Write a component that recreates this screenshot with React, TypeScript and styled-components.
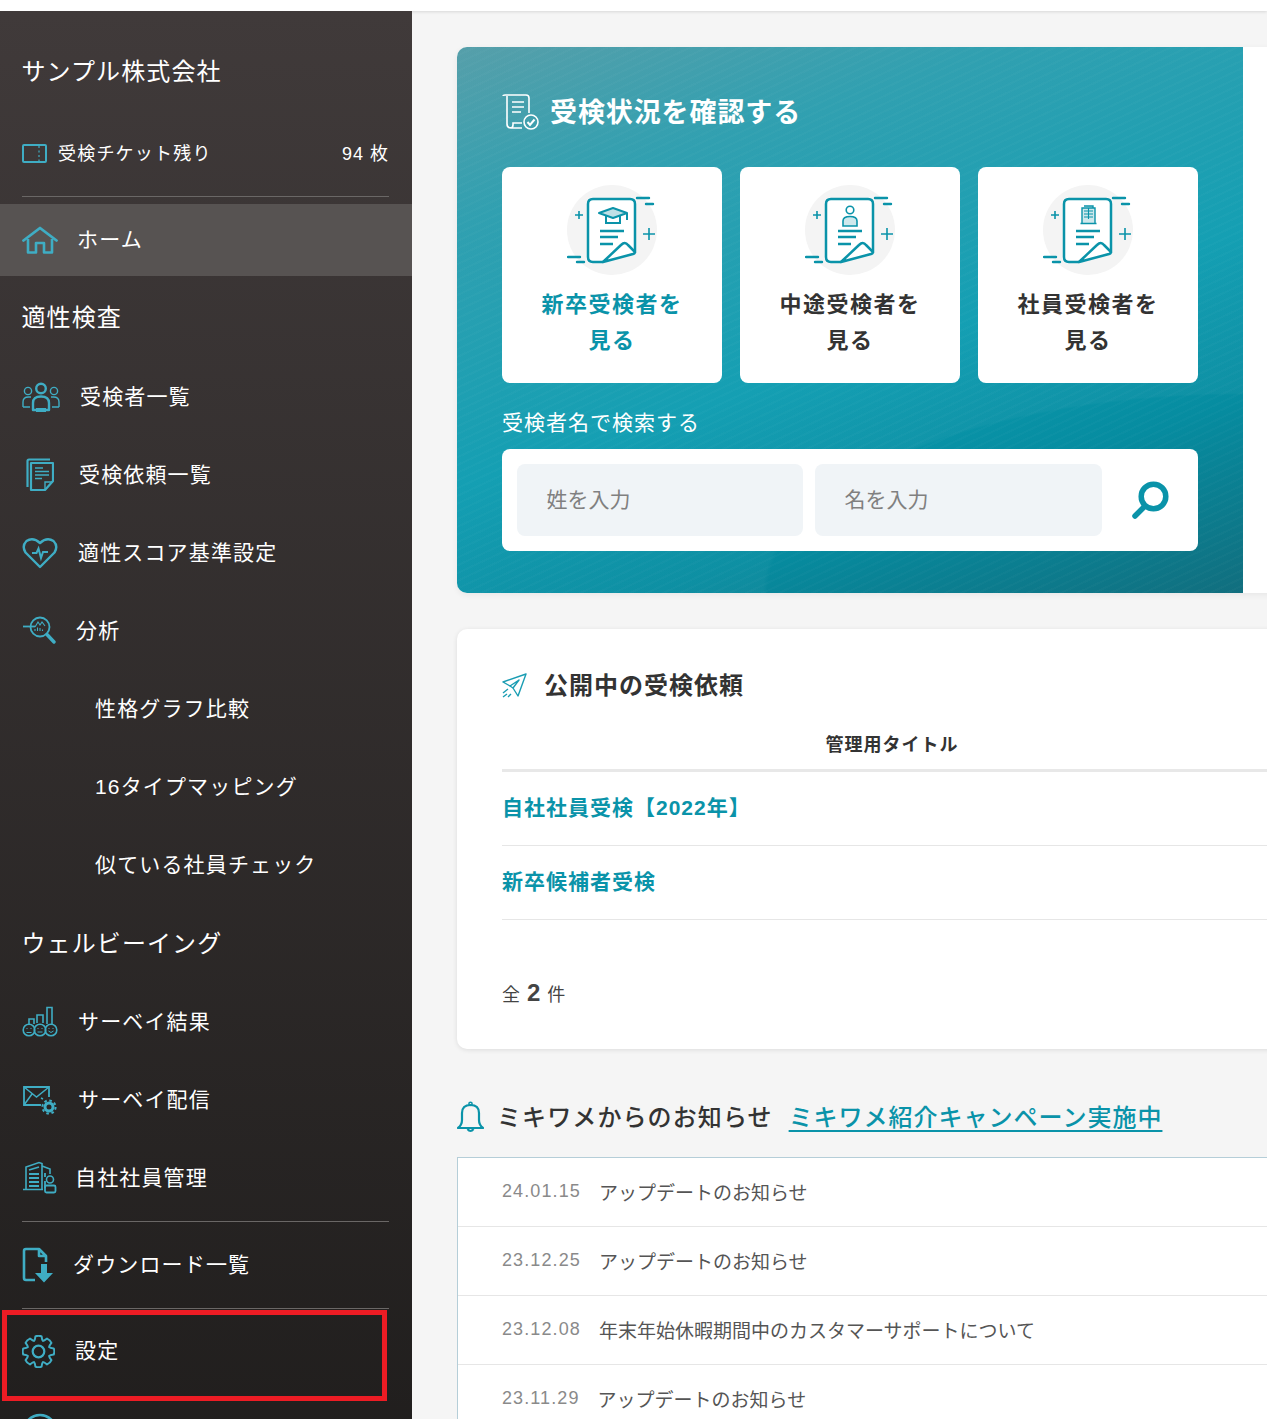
import React from "react";
import styled, { createGlobalStyle } from "styled-components";

const TEAL = "#0a93a9";
const NAV_ICON = "#3fadc4";

const GlobalStyle = createGlobalStyle`
  html, body {
    margin: 0;
    padding: 0;
    background: #f5f5f5;
  }
  body {
    font-family: "Liberation Sans", "Noto Sans CJK JP", sans-serif;
    color: #333;
  }
  * {
    box-sizing: border-box;
  }
`;

const Page = styled.div`
  position: relative;
  width: 1267px;
  height: 1419px;
  overflow: hidden;
  background: #f5f5f5;
`;

const TopBar = styled.div`
  height: 11px;
  background: #fff;
  box-shadow: 0 1px 3px rgba(0, 0, 0, 0.12);
`;

const Body = styled.div`
  display: flex;
  align-items: flex-start;
`;

const Sidebar = styled.aside`
  position: relative;
  flex: none;
  width: 412px;
  height: 1500px;
  background: linear-gradient(180deg, #403a3a 0%, #1f1d1c 100%);
  color: #fff;
`;

const Company = styled.div`
  height: 120px;
  padding: 46px 0 0 21.5px;
  font-size: 24px;
  line-height: 30px;
  letter-spacing: 1.1px;
`;

const Ticket = styled.div`
  display: flex;
  align-items: center;
  height: 44px;
  margin: 0 23px 0 22px;
  font-size: 18px;
  letter-spacing: 1.2px;
`;

const TicketLabel = styled.span`
  margin: 0 0 2px 11px;
  flex: 1;
`;

const TicketCount = styled.span`
  margin-bottom: 2px;
  font-size: 18px;
  letter-spacing: 1px;
`;

const Rule = styled.hr<{ $mt?: number; $mb?: number }>`
  height: 1px;
  margin: ${(p) => p.$mt ?? 0}px 23px ${(p) => p.$mb ?? 0}px 22px;
  border: 0;
  background: #6a6766;
`;

const NavItem = styled.a<{ $h?: number; $active?: boolean; $gap?: number; $indent?: number }>`
  display: flex;
  align-items: center;
  height: ${(p) => p.$h ?? 78}px;
  padding-left: ${(p) => p.$indent ?? 22}px;
  gap: ${(p) => p.$gap ?? 19}px;
  font-size: 21px;
  letter-spacing: 1.15px;
  color: #fff;
  background: ${(p) => (p.$active ? "#575352" : "transparent")};
`;

const NavText = styled.span`
  margin-bottom: 4px;
`;

const NavHeading = styled.div<{ $h?: number }>`
  display: flex;
  align-items: center;
  height: ${(p) => p.$h ?? 82}px;
  padding: 0 0 4px 21.5px;
  font-size: 24px;
  letter-spacing: 1.1px;
`;

const Annotation = styled.div`
  position: absolute;
  left: 2px;
  top: 1299px;
  width: 385px;
  height: 91px;
  border: 5px solid #ed1c24;
`;

const Main = styled.main`
  flex: none;
  width: 900px;
  padding: 36px 0 0 45px;
`;

const HeroCard = styled.section`
  width: 855px;
  height: 546px;
  border-radius: 10px 0 0 10px;
  background: #fff;
  box-shadow: 0 2px 6px rgba(0, 0, 0, 0.06);
`;

const Hero = styled.div`
  width: 786px;
  height: 546px;
  padding: 45px 45px 0;
  border-radius: 10px 0 0 10px;
  background:
    radial-gradient(ellipse 480px 200px at 100% 100%, rgba(255, 255, 255, 0) 99%, rgba(255, 255, 255, 0.03) 100%),
    repeating-linear-gradient(155deg, rgba(255, 255, 255, 0.02) 0 2px, rgba(255, 255, 255, 0) 2px 7px),
    linear-gradient(162deg, #519ca7 0%, #2a9dae 22%, #0d9cb1 55%, #068ca0 76%, #116e7e 100%);
`;

const HeroTitle = styled.h2`
  display: flex;
  align-items: center;
  gap: 11px;
  height: 40px;
  margin: 0;
  font-size: 27px;
  font-weight: 700;
  letter-spacing: 0.9px;
  color: #fff;
`;

const Cards = styled.div`
  display: flex;
  gap: 18px;
  margin-top: 35px;
`;

const Card = styled.a<{ $active?: boolean }>`
  display: flex;
  flex-direction: column;
  align-items: center;
  width: 220px;
  height: 216px;
  padding-top: 18px;
  border-radius: 8px;
  background: #fff;
  color: ${(p) => (p.$active ? TEAL : "#333")};
  font-size: 22px;
  font-weight: 700;
  line-height: 36px;
  letter-spacing: 1.5px;
  text-align: center;
`;

const CardLabel = styled.div`
  margin-top: 12px;
`;

const SearchLabel = styled.div`
  margin-top: 26px;
  font-size: 21px;
  line-height: 28px;
  letter-spacing: 1px;
  color: #fff;
`;

const SearchBox = styled.div`
  display: flex;
  align-items: center;
  gap: 12px;
  width: 696px;
  height: 102px;
  margin-top: 12px;
  padding: 0 0 0 15px;
  border-radius: 8px;
  background: #fff;
`;

const NameInput = styled.div<{ $w: number }>`
  display: flex;
  align-items: center;
  width: ${(p) => p.$w}px;
  height: 72px;
  padding: 0 0 5px 29.5px;
  border-radius: 8px;
  background: #f0f4f7;
  font-size: 21px;
  color: #808080;
`;

const SearchButton = styled.div`
  display: flex;
  justify-content: center;
  flex: 1;
  padding-right: 12px;
`;

const Panel = styled.section`
  width: 855px;
  height: 420px;
  margin-top: 36px;
  padding: 36px 0 0 45px;
  border-radius: 10px 0 0 10px;
  background: #fff;
  box-shadow: 0 1px 5px rgba(0, 0, 0, 0.1);
`;

const PanelTitle = styled.h3`
  display: flex;
  align-items: center;
  gap: 17px;
  height: 40px;
  margin: 0;
  font-size: 24px;
  font-weight: 700;
  letter-spacing: 1px;
  color: #333;
`;

const TableHead = styled.div`
  width: 780px;
  height: 67px;
  padding-top: 26px;
  border-bottom: 3px solid #e8e8e8;
  font-size: 18px;
  font-weight: 700;
  line-height: 29px;
  letter-spacing: 1px;
  text-align: center;
  color: #333;
`;

const TableRow = styled.div`
  display: flex;
  align-items: center;
  height: 74px;
  padding-bottom: 6px;
  border-bottom: 1px solid #e6e6e6;
  color: ${TEAL};
  font-size: 21px;
  font-weight: 700;
  letter-spacing: 1px;
`;

const Total = styled.div`
  display: flex;
  align-items: baseline;
  gap: 7px;
  margin-top: 59px;
  font-size: 18px;
  color: #444;
`;

const TotalNum = styled.strong`
  font-size: 24px;
`;

const NoticeHead = styled.div`
  display: flex;
  align-items: center;
  height: 40px;
  margin-top: 48px;
`;

const NoticeTitle = styled.h3`
  margin: 0 0 4px 13px;
  font-size: 24px;
  font-weight: 500;
  letter-spacing: 1.1px;
  color: #333;
`;

const NoticeLink = styled.a`
  margin: 0 0 4px 16px;
  font-size: 24px;
  font-weight: 500;
  letter-spacing: 1px;
  color: ${TEAL};
  text-decoration: underline;
  text-decoration-thickness: 2px;
  text-underline-offset: 4px;
`;

const NoticeList = styled.ul`
  width: 855px;
  margin: 20px 0 0;
  padding: 0;
  list-style: none;
  border: 1px solid #b5ced8;
  border-right: 0;
  background: #fff;
`;

const NoticeRow = styled.li`
  display: flex;
  align-items: center;
  gap: 18px;
  height: 69px;
  padding: 0 0 2px 44px;
  border-bottom: 1px solid #e6e6e6;
  font-size: 19px;
  color: #555;
`;

const NoticeDate = styled.span`
  font-size: 18px;
  letter-spacing: 1.1px;
  color: #8a8a8a;
`;

const NavSvg: React.FC<{ w?: number; h?: number; vb: string; children: React.ReactNode }> = ({
  w = 38,
  h = 38,
  vb,
  children,
}) => (
  <svg width={w} height={h} viewBox={vb} fill="none" stroke={NAV_ICON} strokeWidth={1.8} style={{ flex: "none" }}>
    {children}
  </svg>
);

const CardIcon: React.FC<{ children: React.ReactNode }> = ({ children }) => (
  <svg width="90" height="90" viewBox="0 0 90 90" fill="none" stroke={TEAL} style={{ flex: "none" }}>
    <circle cx="45" cy="45" r="45" fill="#f4f4f4" stroke="none" />
    <path d="M36 77 H26 Q21 77 21 72 V19 Q21 14 26 14 H63 Q68 14 68 19 V68" fill="#fff" strokeWidth="2.5" />
    <path d="M36 77 L54 60 Q58 56 61 60 L67 66 Q69 68 66 69 Z" fill="#fff" strokeWidth="2.5" strokeLinejoin="round" />
    <path d="M33 46 H57 M33 52 H51 M33 59 H46" strokeWidth="2.4" />
    <path d="M70 13 H82 M79 19 H86 M1 72 H13 M10 77 H17" strokeWidth="2.4" strokeLinecap="round" />
    <path d="M82 43 V55 M76 49 H88 M12 26 V34 M8 30 H16" strokeWidth="1.6" />
    {children}
  </svg>
);

// 8-tooth cog outline, centred in a 33x33 box
const gearPath = () => {
  const pts: string[] = [];
  const c = 16.5;
  for (let i = 0; i < 8; i++) {
    const a = (i * Math.PI) / 4 - Math.PI / 2;
    const at = (r: number, d: number) =>
      `${(c + r * Math.cos(a + d)).toFixed(2)} ${(c + r * Math.sin(a + d)).toFixed(2)}`;
    pts.push(`${i === 0 ? "M" : "L"}${at(11.5, -0.39)} Q${at(12, -0.3)} ${at(15.5, -0.2)} Q${at(16.5, 0)} ${at(15.5, 0.2)} Q${at(12, 0.3)} ${at(11.5, 0.39)}`);
  }
  return pts.join(" ") + " Z";
};

const App: React.FC = () => {
  const notices = [
    ["24.01.15", "アップデートのお知らせ"],
    ["23.12.25", "アップデートのお知らせ"],
    ["23.12.08", "年末年始休暇期間中のカスタマーサポートについて"],
    ["23.11.29", "アップデートのお知らせ"],
  ];

  return (
    <Page>
      <GlobalStyle />
      <TopBar />
      <Body>
        <Sidebar>
          <Company>サンプル株式会社</Company>
          <Ticket>
            <NavSvg w={25} h={19} vb="0 0 25 19">
              <rect x="1" y="1" width="23" height="17" rx="1" strokeWidth="2" />
              <path d="M17 2 V17" strokeDasharray="2 2.5" strokeWidth="1.2" />
            </NavSvg>
            <TicketLabel>受検チケット残り</TicketLabel>
            <TicketCount>94 枚</TicketCount>
          </Ticket>
          <Rule $mt={21} $mb={7} />
          <NavItem $h={72} $active $gap={19}>
            <NavSvg w={36} h={28} vb="0 0 36 28">
              <path d="M1.5 14.5 L18 2 L34.5 14.5" strokeWidth="2.8" strokeLinecap="round" strokeLinejoin="round" />
              <path d="M6 13 V26.5 H14 V17 H22 V26.5 H30 V13" strokeWidth="2.6" strokeLinejoin="round" />
            </NavSvg>
            <NavText>ホーム</NavText>
          </NavItem>
          <NavHeading>適性検査</NavHeading>
          <NavItem $gap={20}>
            <NavSvg vb="0 0 38 30" w={38} h={30}>
              <circle cx="19" cy="6.5" r="4.8" strokeWidth="2.4" />
              <circle cx="6" cy="9" r="3.6" strokeWidth="1.4" />
              <circle cx="32" cy="9" r="3.6" strokeWidth="1.4" />
              <path d="M11 28 V21 Q11 14.5 19 14.5 Q27 14.5 27 21 V28 Z" fill="none" strokeWidth="2.4" strokeLinejoin="round" />
              <path d="M14 28 H24" strokeWidth="4" />
              <path d="M1 25 V20 Q1 15 6.5 15 H9 M37 25 V20 Q37 15 31.5 15 H29 M1 25 H8 M37 25 H30" strokeWidth="1.4" />
            </NavSvg>
            <NavText>受検者一覧</NavText>
          </NavItem>
          <NavItem $indent={26} $gap={25}>
            <NavSvg vb="0 0 28 34" w={28} h={34}>
              <path d="M24 1.5 H3 Q1.5 1.5 1.5 3 V29" strokeWidth="2.2" />
              <path d="M5 5 H27 V23 L19 32 H5 Z" strokeWidth="2.2" strokeLinejoin="round" />
              <path d="M19 32 V24 H27" strokeWidth="1.4" />
              <path d="M9 10 H17 M9 13.5 H23 M9 17 H23 M9 20.5 H16" strokeWidth="1.4" />
            </NavSvg>
            <NavText>受検依頼一覧</NavText>
          </NavItem>
          <NavItem $gap={20}>
            <NavSvg vb="0 0 36 32" w={36} h={32}>
              <path d="M18 30 L3.5 15.5 Q-0.5 9 4.5 4 Q11 -0.5 18 6 Q25 -0.5 31.5 4 Q36.5 9 32.5 15.5 Z" strokeWidth="2.4" strokeLinejoin="round" />
              <path d="M10 16 H14.5 L16.5 11.5 L19 21 L21 15 H26" strokeWidth="2" />
            </NavSvg>
            <NavText>適性スコア基準設定</NavText>
          </NavItem>
          <NavItem $gap={20}>
            <NavSvg vb="0 0 34 30" w={34} h={30}>
              <circle cx="18" cy="11" r="9.5" strokeWidth="1.8" />
              <path d="M1 10.5 H13" strokeWidth="1.8" />
              <path d="M25 18.5 L32 26" strokeWidth="3.4" strokeLinecap="round" />
              <path d="M13 11 L16 6 L18 9 L20 6 L23 10 M13 15 V13 M15.5 15 V11.5 M18 15 V12 M20.5 15 V13.5" strokeWidth="1.1" />
            </NavSvg>
            <NavText>分析</NavText>
          </NavItem>
          <NavItem $indent={95}><NavText>性格グラフ比較</NavText></NavItem>
          <NavItem $indent={95}><NavText>16タイプマッピング</NavText></NavItem>
          <NavItem $indent={95}><NavText>似ている社員チェック</NavText></NavItem>
          <NavHeading $h={79}>ウェルビーイング</NavHeading>
          <NavItem $gap={20}>
            <NavSvg vb="0 0 36 32" w={36} h={32}>
              <path d="M7 19 V13 H12 V18 M15 17 V9 H21 V17 M25 18 V1.5 H30 V19" strokeWidth="1.6" />
              <circle cx="7" cy="24" r="5.8" strokeWidth="1.6" />
              <circle cx="18" cy="24" r="5.8" strokeWidth="1.6" />
              <circle cx="29" cy="24" r="5.8" strokeWidth="1.6" />
              <path d="M4.5 26.5 H9.5 M15.5 26 H20.5 M26.5 25 Q29 28 31.5 25 M5 22 V23 M9 22 V23 M16 22 V23 M20 22 V23 M27 22 V23 M31 22 V23" strokeWidth="1" />
            </NavSvg>
            <NavText>サーベイ結果</NavText>
          </NavItem>
          <NavItem $gap={20}>
            <NavSvg vb="0 0 36 32" w={36} h={32}>
              <path d="M19 21 H2 V3 H27 V13" strokeWidth="1.8" />
              <path d="M2 3 L14.5 13 L27 3 M2 21 L10 10 M19 14 L21 15" strokeWidth="1.5" />
              <circle cx="27" cy="23" r="4" strokeWidth="3" />
              <circle cx="27" cy="23" r="6.6" strokeWidth="2" strokeDasharray="2.6 2.6" />
            </NavSvg>
            <NavText>サーベイ配信</NavText>
          </NavItem>
          <NavItem $gap={15}>
            <NavSvg vb="0 0 38 34" w={38} h={34}>
              <path d="M1 28.5 H21 M4 28 V6 L17 1.5 L20 2.5 V28 M20 5 L28 8 V13" strokeWidth="1.6" />
              <path d="M7 9 L17 6 M7 13 H17 M7 17 H17 M7 21 H17 M7 25 H17 M23 12 V16 M23 20 V27" strokeWidth="1.8" />
              <circle cx="28" cy="18.5" r="3.5" strokeWidth="1.6" />
              <rect x="23" y="24.5" width="10.5" height="7" rx="1.5" strokeWidth="1.8" />
            </NavSvg>
            <NavText>自社社員管理</NavText>
          </NavItem>
          <Rule $mt={4} $mb={4} />
          <NavItem $h={78} $gap={15}>
            <NavSvg vb="0 0 36 36" w={36} h={36}>
              <path d="M13 33 H4 Q2 33 2 31 V4 Q2 2 4 2 H17 L24 9 V15 M17 2 V9 H24" strokeWidth="2.6" strokeLinejoin="round" />
              <path d="M19 17 H25 V26 H31 L22 35.5 L13 26 H19 Z" fill={NAV_ICON} stroke="none" />
            </NavSvg>
            <NavText>ダウンロード一覧</NavText>
          </NavItem>
          <Rule $mt={4} $mb={0} />
          <NavItem $h={84} $gap={20}>
            <NavSvg vb="0 0 33 33" w={33} h={33}>
              <circle cx="16.5" cy="16.5" r="5.8" strokeWidth="2.2" />
              <path d={gearPath()} strokeWidth="2" strokeLinejoin="round" />
            </NavSvg>
            <NavText>設定</NavText>
          </NavItem>
          <NavItem $h={76} $gap={20}>
            <NavSvg vb="0 0 36 36" w={36} h={36}>
              <circle cx="18" cy="18" r="16" strokeWidth="2.6" />
            </NavSvg>
            <NavText>ヘルプ</NavText>
          </NavItem>
          <Annotation />
        </Sidebar>

        <Main>
          <HeroCard>
            <Hero>
              <HeroTitle>
                <svg width="37" height="37" viewBox="0 0 37 37" fill="none" stroke="#fff" strokeWidth="1.6" style={{ flex: "none" }}>
                  <path d="M1 2 Q1 1 3 1 H24 Q27 1 27 4 V19 M5 2 V30 Q5 34 9 34 H20 M8 34 Q11 34 11 31 V29 H20" />
                  <path d="M10 8 H22 M10 13 H22 M10 18 H19" />
                  <circle cx="29" cy="28" r="7" />
                  <path d="M25.5 28 L28 31 L32.5 25.5" strokeWidth="2" />
                </svg>
                <NavText>受検状況を確認する</NavText>
              </HeroTitle>
              <Cards>
                <Card $active>
                  <CardIcon>
                    <path d="M32 28 L46 23 L60 28 L46 33 Z" fill="#bfe0e6" strokeWidth="2" strokeLinejoin="round" />
                    <path d="M39 31 V38 H53 V31 M60 28 V35" strokeWidth="2" />
                  </CardIcon>
                  <CardLabel>
                    新卒受検者を
                    <br />
                    見る
                  </CardLabel>
                </Card>
                <Card>
                  <CardIcon>
                    <circle cx="45" cy="25" r="3.8" strokeWidth="1.6" />
                    <path d="M38 41 V36 Q38 31.5 45 31.5 Q52 31.5 52 36 V41 Z" fill="#cfe8ec" strokeWidth="1.6" />
                  </CardIcon>
                  <CardLabel>
                    中途受検者を
                    <br />
                    見る
                  </CardLabel>
                </Card>
                <Card>
                  <CardIcon>
                    <path d="M39 38 V23 H52 V38 M37.5 38.5 H53.5 M41 21 H50 V23" strokeWidth="1.4" fill="#cfe8ec" />
                    <path d="M41 26 H50 M41 29 H50 M41 32 H50 M45.5 23 V34" strokeWidth="1.1" />
                  </CardIcon>
                  <CardLabel>
                    社員受検者を
                    <br />
                    見る
                  </CardLabel>
                </Card>
              </Cards>
              <SearchLabel>受検者名で検索する</SearchLabel>
              <SearchBox>
                <NameInput $w={286}>姓を入力</NameInput>
                <NameInput $w={287}>名を入力</NameInput>
                <SearchButton>
                  <svg width="38" height="38" viewBox="0 0 38 38" fill="none" stroke={TEAL} style={{ flex: "none" }}>
                    <circle cx="22.5" cy="15.5" r="12.3" strokeWidth="5.5" />
                    <path d="M13 26 L4 35" strokeWidth="5.5" strokeLinecap="round" />
                  </svg>
                </SearchButton>
              </SearchBox>
            </Hero>
          </HeroCard>

          <Panel>
            <PanelTitle>
              <svg width="25" height="25" viewBox="0 0 25 25" fill="none" stroke="#1a9db3" strokeWidth="1.4" style={{ flex: "none" }}>
                <path d="M24 1 L1 9 L8 13 L17 7 L11 15 L16 23 Z" strokeLinejoin="round" />
                <path d="M8 13 L11 15 M1 20 L6 16 M1 24 L5 21 M6 24 L9 21" />
              </svg>
              <NavText>公開中の受検依頼</NavText>
            </PanelTitle>
            <TableHead>管理用タイトル</TableHead>
            <TableRow>自社社員受検【2022年】</TableRow>
            <TableRow>新卒候補者受検</TableRow>
            <Total>
              全<TotalNum>2</TotalNum>件
            </Total>
          </Panel>

          <NoticeHead>
            <svg width="27" height="32" viewBox="0 0 27 32" fill="none" stroke={TEAL} strokeWidth="2.2" style={{ flex: "none" }}>
              <path d="M1 27 Q5 24 5 19 V12 Q5 4 13.5 4 Q22 4 22 12 V19 Q22 24 26 27 Z" strokeLinejoin="round" />
              <circle cx="13.5" cy="2.8" r="1.6" strokeWidth="1.5" />
              <path d="M10.5 28 Q13.5 32 16.5 28" />
            </svg>
            <NoticeTitle>ミキワメからのお知らせ</NoticeTitle>
            <NoticeLink>ミキワメ紹介キャンペーン実施中</NoticeLink>
          </NoticeHead>
          <NoticeList>
            {notices.map(([date, title]) => (
              <NoticeRow key={date}>
                <NoticeDate>{date}</NoticeDate>
                {title}
              </NoticeRow>
            ))}
          </NoticeList>
        </Main>
      </Body>
    </Page>
  );
};

export default App;
